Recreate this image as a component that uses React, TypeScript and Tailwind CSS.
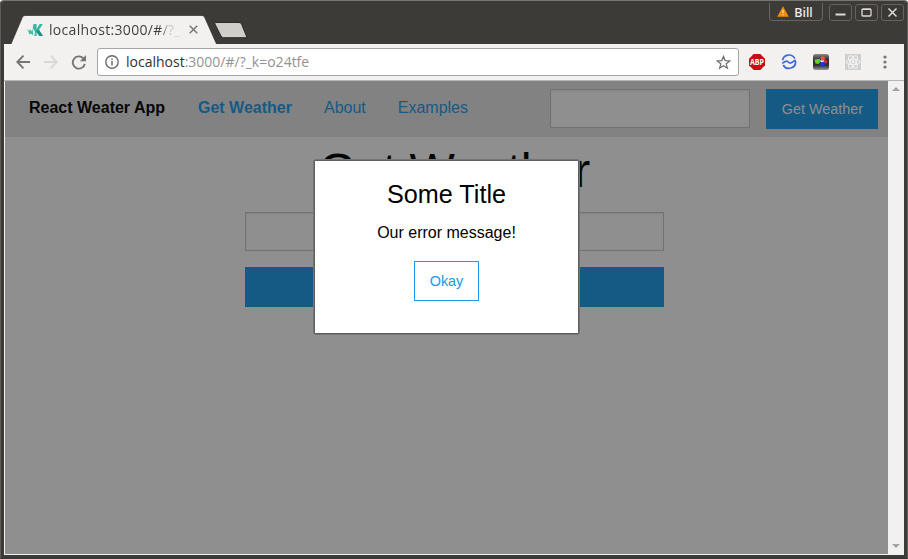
import React from "react";

const WindowButton = ({ children }: { children: React.ReactNode }) => (
  <div className="flex h-[17px] w-[23px] items-center justify-center rounded-[3px] border border-[#65645f] bg-[#3a3935]">
    <svg width="21" height="15" viewBox="0 0 21 15" fill="none" stroke="#dfdbd2">{children}</svg>
  </div>
);

const TitleBar = () => (
  <header className="flex h-11 shrink-0 items-start bg-[#3c3b37] pl-[7px]">
    <div className="relative mt-[15px] flex h-[29px] w-[206px] items-center">
      <svg className="absolute inset-0" width="206" height="29" viewBox="0 0 206 29">
        <path d="M0 29 L11.5 2 Q12.3 .5 14 .5 H191 Q192.7 .5 193.5 2 L205.5 29Z" fill="#f2f1f0" />
        <path d="M0 29 L11.5 2 Q12.3 .5 14 .5 H191 Q192.7 .5 193.5 2 L205.5 29" fill="none" stroke="#302f2b" strokeWidth=".7" />
      </svg>
      <svg className="relative ml-4 shrink-0" width="16" height="14" viewBox="0 0 16 14">
        <path d="M0 5.5 2 8 3.2 6.3 5 8.5 6 5.5V12.5L4 10.5 2.5 11.5Z" fill="#42bda8" />
        <path d="M6.5 1H9.6V6L12.6 1H15.8L12 7 16 13H12.4L9.6 9V13H7.3L8 9 5.8 5Z" fill="#35b8a5" />
        <path d="M9.6 7 12 7 16 13H12.4L9.6 9Z" fill="#278f83" />
      </svg>
      <span className="relative ml-[6px] w-[132px] overflow-hidden whitespace-nowrap bg-[linear-gradient(90deg,#3c3c3c_84%,#b8b8b8_90%,#e4e4e4_100%)] bg-clip-text font-['Open_Sans',sans-serif] text-[14px] leading-5 tracking-[0.32px] text-transparent">
        localhost:3000/#/?_
      </span>
      <svg className="relative ml-[8px]" width="9" height="9" viewBox="0 0 9 9">
        <path d="M.7.7 8.3 8.3M8.3.7.7 8.3" stroke="#77787a" strokeWidth="1.5" />
      </svg>
    </div>
    <svg className="-ml-[3px] mt-[22px]" width="34" height="17" viewBox="0 0 34 17">
      <path d="M2 .5H25Q26.8.5 27.5 2L33 15.7H9.5Q7.8 15.7 7 14L.8 1.8Q.3.5 2 .5Z" fill="#cfcecb" stroke="#2d2c29" />
    </svg>
    <div className="ml-auto mt-[3px] flex items-start">
      <div className="flex h-[18px] w-[54px] items-center justify-center gap-[5px] rounded-b-[4px] border border-t-0 border-[#66655f]">
        <svg width="12" height="11" viewBox="0 0 12 11">
          <path d="M6 .2 11.8 10.8H.2Z" fill="#f18b0c" />
          <path d="M6 4V7M6 8V9.3" stroke="#ffe3b8" strokeWidth="1.2" />
        </svg>
        <span className="pt-[2px] pr-[2px] font-['Noto_Sans',sans-serif] text-[12.5px] font-medium leading-4 text-[#f2f1f0]">Bill</span>
      </div>
      <div className="ml-[6px] mt-px flex gap-[3px]">
        <WindowButton><path d="M5.5 9.5H15.5" strokeWidth="2" /></WindowButton>
        <WindowButton><rect x="6" y="4" width="9" height="7" rx="1" strokeWidth="1.3" /><path d="M6 4.5H15" /></WindowButton>
        <WindowButton><path d="M6.5 3.5 14.5 11.5M14.5 3.5 6.5 11.5" strokeWidth="1.5" /></WindowButton>
      </div>
    </div>
  </header>
);

const Toolbar = () => (
  <div className="flex h-[37px] shrink-0 items-center border-b border-[#b6b4b6] bg-[#f2f1f0] pl-[12px]">
    <svg width="70" height="16" viewBox="0 0 70 16" fill="none" strokeWidth="1.9">
      <path d="M14 8H1.5M7.5 1.7 1.3 8l6.2 6.3" stroke="#757575" />
      <path d="M28 8H40.5M34.5 1.7 40.7 8l-6.2 6.3" stroke="#d9d8d7" />
      <path d="M67.3 4.3A6.1 6.1 0 1 0 68.8 10" stroke="#757575" />
      <path d="M70 1V7.2H63.8Z" fill="#757575" />
    </svg>
    <div className="ml-[11px] flex h-[28px] w-[642px] items-center rounded-[3px] border border-[#a5a5a5] bg-white pl-[7px] pr-[7px]">
      <svg width="14" height="14" viewBox="0 0 14 14" fill="none" stroke="#6b6b6b">
        <circle cx="7" cy="7" r="6.2" strokeWidth="1.4" /><path d="M7 6V10.4M7 3.4V5" strokeWidth="1.5" />
      </svg>
      <span className="ml-[7px] whitespace-nowrap font-['Open_Sans',sans-serif] text-[14px] leading-5 text-[#929292]">
        <span className="text-[#303030]">localhost</span>:3000/#/?_k=o24tfe
      </span>
      <svg className="ml-auto" width="15" height="15" viewBox="0 0 15 15">
        <path d="M7.5 1.4 9.2 5.6 13.8 5.9 10.2 8.8 11.4 13.2 7.5 10.8 3.6 13.2 4.8 8.8 1.2 5.9 5.8 5.6Z" fill="none" stroke="#6b6b6b" strokeWidth="1.2" />
      </svg>
    </div>
    <div className="ml-[10px] flex items-center gap-4">
      <svg className="overflow-visible" width="16" height="16" viewBox="0 0 16 16">
        <path d="M4.7 0H11.3L16 4.7V11.3L11.3 16H4.7L0 11.3V4.7Z" fill="#c70d12" />
        <text x="8" y="11" textAnchor="middle" textLength="14" lengthAdjust="spacingAndGlyphs" fontFamily="Open Sans" fontSize="8.5" fontWeight="700" fill="white">ABP</text>
      </svg>
      <svg width="16" height="16" viewBox="0 0 16 16" fill="none" stroke="#4169e1" strokeWidth="1.7">
        <path d="M1.5 6.2A6.6 6.6 0 0 1 13.8 4.6M2.2 11A6.6 6.6 0 0 0 14.5 7M1.2 9.2 4.8 7.2Q6 6.8 7.2 8 8.8 9.6 10.3 8.8L14.7 6" />
      </svg>
      <svg width="16" height="16" viewBox="0 0 16 16">
        <defs><linearGradient id="tile" x2="0" y2="1"><stop stopColor="#8a8a8a" /><stop offset=".35" stopColor="#303030" /><stop offset=".7" stopColor="#303030" /><stop offset="1" stopColor="#999" /></linearGradient></defs>
        <rect width="16" height="16" rx="2.5" fill="url(#tile)" />
        <path d="M1.5 5.5 6.5 4.8 7.5 7.5 5.5 10 2.5 9.5Z" fill="#54d72e" />
        <circle cx="9.8" cy="4.5" r="2.2" fill="#ff4b44" /><circle cx="12.4" cy="7.6" r="1.9" fill="#e92631" />
        <circle cx="9.6" cy="10" r="2.5" fill="#1b35df" /><path d="M7 6 9.4 6.6 11 6.2 10.5 8 8 8.3Z" fill="#e8ecff" />
      </svg>
      <svg width="16" height="16" viewBox="0 0 16 16">
        <rect width="16" height="16" fill="#cfcfcf" />
        <g fill="none" stroke="#f4f4f4" strokeWidth="1"><ellipse cx="8" cy="8" rx="7" ry="2.8" /><ellipse cx="8" cy="8" rx="7" ry="2.8" transform="rotate(60 8 8)" /><ellipse cx="8" cy="8" rx="7" ry="2.8" transform="rotate(120 8 8)" /></g>
        <circle cx="8" cy="8" r="1.4" fill="#f4f4f4" />
      </svg>
    </div>
    <svg className="ml-[22px]" width="4" height="14" viewBox="0 0 4 14" fill="#757575">
      <circle cx="2" cy="2" r="1.6" /><circle cx="2" cy="7" r="1.6" /><circle cx="2" cy="12" r="1.6" />
    </svg>
  </div>
);

const Dialog = () => (
  <div className="absolute left-[308px] top-[78px] flex h-[176px] w-[267px] flex-col items-center rounded-[3px] border border-[#757575] bg-[#5e5e5e] p-px text-black">
    <div className="flex w-full flex-1 flex-col items-center bg-white">
      <h2 className="mt-[15px] text-[25.2px] leading-9">Some Title</h2>
      <p className="mt-[9px] text-[16px] leading-6">Our error message!</p>
      <button className="mt-[16px] h-10 w-[65px] border border-[#2199e8] pt-px text-[14.4px] text-[#2199e8]">Okay</button>
    </div>
  </div>
);

const Page = () => (
  <main className="relative flex min-w-0 flex-1 flex-col overflow-hidden bg-[#8f8f8f] font-['Liberation_Sans',Arial,sans-serif]">
    <nav className="flex h-14 shrink-0 items-start bg-[#828282] pl-6 pr-[10px] pt-2 text-[16px] leading-[38px] text-[#155a84]">
      <span className="w-[137px] whitespace-nowrap font-bold text-[#060606]">React Weater App</span>
      <a className="ml-8 font-bold">Get Weather</a>
      <a className="ml-8">About</a>
      <a className="ml-8">Examples</a>
      <input aria-label="Location" className="ml-auto h-[39px] w-[200px] border border-[#727272] bg-[#8f8f8f] shadow-[inset_0_1px_2px_rgba(0,0,0,0.08)]" />
      <button className="ml-4 h-10 w-28 bg-[#155a84] pb-px pl-px text-[14.4px] text-[#8f8f8f]">Get Weather</button>
    </nav>
    <section className="ml-[240px] flex w-[419px] flex-col">
      <h1 className="h-[75px] text-center text-[48px] leading-[67px] text-[#060606]">Get Weather</h1>
      <input aria-label="City" className="h-[39px] border border-[#727272] bg-[#8f8f8f] shadow-[inset_0_1px_2px_rgba(0,0,0,0.08)]" />
      <button className="mt-4 h-10 bg-[#155a84]" />
    </section>
    <Dialog />
  </main>
);

export default function App() {
  return (
    <div className="flex h-[559px] w-[908px] flex-col overflow-hidden rounded-t-[4px] border-t border-[#77766f] bg-[#3c3b37]">
      <div className="flex min-h-0 flex-1 flex-col border-x border-b border-x-[#5b5b58] border-b-[#333] border-t-2 border-t-[#4b4a46] pb-[3px]">
        <div className="-mt-[3px] flex min-h-0 flex-1 flex-col pl-[3px] pr-[3px]">
          <TitleBar />
          <Toolbar />
          <div className="flex min-h-0 flex-1 border-b border-l border-[#f2f1f0]">
            <Page />
            <aside className="flex w-[16px] shrink-0 flex-col items-center justify-between bg-[#f1f1f1] py-[6px]">
              <svg width="8" height="4" viewBox="0 0 8 4"><path d="M0 4 4 0 8 4Z" fill="#a3a3a3" /></svg>
              <svg width="8" height="4" viewBox="0 0 8 4"><path d="M0 0 4 4 8 0Z" fill="#a3a3a3" /></svg>
            </aside>
          </div>
        </div>
      </div>
    </div>
  );
}
